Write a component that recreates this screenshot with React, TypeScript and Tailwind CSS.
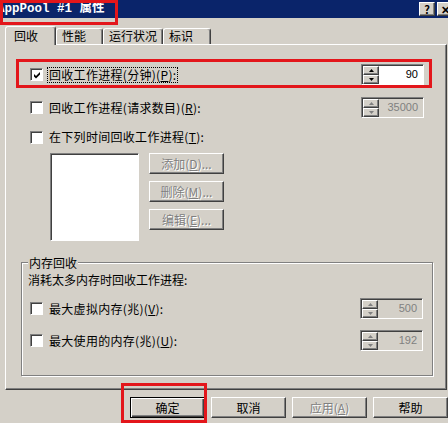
import type { ReactNode } from 'react'

const raised =
  'border border-t-white border-l-white border-r-[#404040] border-b-[#404040] shadow-[inset_-1px_-1px_0_#808080]'
const sunken =
  'border border-t-[#808080] border-l-[#808080] border-r-white border-b-white shadow-[inset_1px_1px_0_#404040]'
const greyText = 'text-[#808080] [text-shadow:1px_1px_0_#fff]'

function Arrow({ up, disabled }: { up?: boolean; disabled?: boolean }) {
  return (
    <svg width="5" height="3" viewBox="0 0 5 3">
      <path d={up ? 'M2.5 0L5 3H0Z' : 'M0 0H5L2.5 3Z'} fill={disabled ? '#808080' : '#000'} />
    </svg>
  )
}

function Spin({ value, disabled }: { value: string; disabled?: boolean }) {
  return (
    <div className={`flex h-[21px] w-[63px] ${sunken} ${disabled ? 'bg-[#d4d0c8]' : 'bg-white'}`}>
      <div className="ml-px mt-px flex w-[16px] flex-col bg-[#d4d0c8]">
        <div className={`flex flex-1 items-center justify-center ${raised}`}>
          <Arrow up disabled={disabled} />
        </div>
        <div className={`flex flex-1 items-center justify-center ${raised}`}>
          <Arrow disabled={disabled} />
        </div>
      </div>
      <div
        className={`flex flex-1 items-center justify-end pr-[5px] text-[11px] [font-family:'Liberation_Sans',sans-serif] ${
          disabled ? 'text-[#808080]' : 'text-black'
        }`}
      >
        {value}
      </div>
    </div>
  )
}

function Check({ checked }: { checked?: boolean }) {
  return (
    <div className={`flex h-[13px] w-[13px] shrink-0 items-center justify-center bg-white ${sunken}`}>
      {checked ? (
        <svg width="7" height="7" viewBox="0 0 7 7" className="ml-px mt-px">
          <path d="M0 2L2 4L6 0V2.5L2 6.5L0 4.5Z" fill="#000" />
        </svg>
      ) : null}
    </div>
  )
}

function Row({ children, checked, focused }: { children: ReactNode; checked?: boolean; focused?: boolean }) {
  return (
    <div className="flex items-center">
      <Check checked={checked} />
      <span
        className={`ml-[4px] border px-px leading-[14px] tracking-[0.3px] ${focused ? 'border-dotted border-black' : 'border-transparent'}`}
      >
        {children}
      </span>
    </div>
  )
}

function Btn({ children, disabled, isDefault }: { children: ReactNode; disabled?: boolean; isDefault?: boolean }) {
  return (
    <div
      className={`flex h-[21px] w-[75px] items-center justify-center ${
        isDefault
          ? 'border border-black shadow-[inset_1px_1px_0_#fff,inset_-1px_-1px_0_#404040,inset_-2px_-2px_0_#808080]'
          : raised
      } ${disabled ? greyText : 'text-black'}`}
    >
      {children}
    </div>
  )
}

function Tab({ children, width, selected }: { children: ReactNode; width: string; selected?: boolean }) {
  return (
    <div
      className={`${width} ${
        selected ? 'relative z-10 -mb-px h-[19px] pl-[8px] pt-[2px]' : 'h-[16px] pl-[5px]'
      } rounded-t-[3px] border-l border-t border-r border-l-white border-t-white border-r-[#404040] bg-[#d4d0c8] leading-[14px] shadow-[inset_-1px_0_0_#808080]`}
    >
      {children}
    </div>
  )
}

export default function App() {
  return (
    <div className="relative h-[423px] w-[448px] overflow-hidden bg-[#d4d0c8] text-[12px] text-black [font-family:'Noto_Sans_CJK_SC',sans-serif]">
      <div className="flex h-[18px] items-center bg-[#0a246a]">
        <div className="ml-[-3px] flex-1 text-[12.5px] font-bold text-white [font-family:'Liberation_Mono','Noto_Sans_CJK_SC',monospace]">
          AppPool #1 属性
        </div>
        <div className="mr-[-5px] flex gap-[2px]">
          <div className={`flex h-[14px] w-[16px] items-center justify-center bg-[#d4d0c8] text-[11px] font-bold leading-none ${raised}`}>?</div>
          <div className={`flex h-[14px] w-[16px] items-center justify-center bg-[#d4d0c8] text-[11px] font-bold leading-none ${raised}`}>✕</div>
        </div>
      </div>

      <div className="mt-[8px] flex h-[18px] items-end pl-[5px]">
        <Tab width="w-[51px]" selected>回收</Tab>
        <Tab width="w-[47px]">性能</Tab>
        <Tab width="w-[60px]">运行状况</Tab>
        <Tab width="w-[48px]">标识</Tab>
      </div>

      <div className="ml-[5px] h-[346px] w-[442px] border border-t-white border-l-white border-r-[#404040] border-b-[#404040] shadow-[inset_-1px_-1px_0_#808080]">
        <div className="mt-[19px] flex items-center justify-between pl-[24px] pr-[22px]">
          <Row checked focused>
            回收工作进程(分钟)(<u>P</u>):
          </Row>
          <Spin value="90" />
        </div>
        <div className="mt-[12px] flex items-center justify-between pl-[24px] pr-[22px]">
          <Row>
            回收工作进程(请求数目)(<u>R</u>):
          </Row>
          <Spin value="35000" disabled />
        </div>
        <div className="mt-[11px] flex h-[16px] items-center pl-[24px]">
          <Row>
            在下列时间回收工作进程(<u>T</u>):
          </Row>
        </div>
        <div className="ml-[44px] mt-[8px] flex gap-[10px]">
          <div className={`h-[88px] w-[89px] bg-white ${sunken}`} />
          <div className="flex flex-col gap-[7px]">
            <Btn disabled>
              添加(<u>D</u>)...
            </Btn>
            <Btn disabled>
              删除(<u>M</u>)...
            </Btn>
            <Btn disabled>
              编辑(<u>E</u>)...
            </Btn>
          </div>
        </div>

        <div className="relative ml-[15px] mt-[21px] h-[114px] w-[412px] border border-[#808080] pl-[8px] pr-[9px] pt-[9px] shadow-[inset_1px_1px_0_#fff,1px_1px_0_#fff]">
          <span className="absolute -top-[8px] left-[6px] bg-[#d4d0c8] px-px leading-[15px]">内存回收</span>
          <div className="-ml-[2px] leading-[16px]">消耗太多内存时回收工作进程:</div>
          <div className="mt-[10px] flex items-center justify-between">
            <Row>
              最大虚拟内存(兆)(<u>V</u>):
            </Row>
            <Spin value="500" disabled />
          </div>
          <div className="mt-[11px] flex items-center justify-between">
            <Row>
              最大使用的内存(兆)(<u>U</u>):
            </Row>
            <Spin value="192" disabled />
          </div>
        </div>
      </div>

      <div className="mt-[7px] flex gap-[6px] pl-[130px]">
        <Btn isDefault>确定</Btn>
        <Btn>取消</Btn>
        <Btn disabled>
          应用(<u>A</u>)
        </Btn>
        <Btn>帮助</Btn>
      </div>

      <div className="pointer-events-none absolute left-0 top-0 h-[25px] w-[118px] border-[3px] border-[#e3161b]" />
      <div className="pointer-events-none absolute left-[16px] top-[59px] h-[29px] w-[416px] border-[3px] border-[#e3161b]" />
      <div className="pointer-events-none absolute left-[121px] top-[383px] h-[40px] w-[86px] border-[3px] border-[#e3161b]" />
    </div>
  )
}
